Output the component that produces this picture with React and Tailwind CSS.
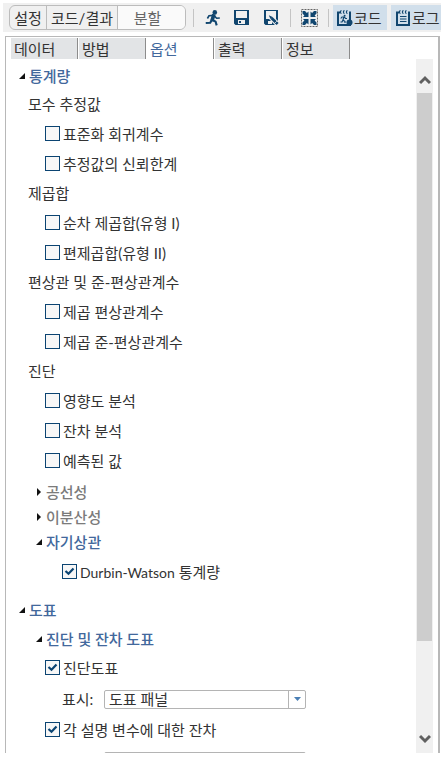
import { useState } from 'react';

const TABS = ['데이터', '방법', '옵션', '출력', '정보'];

const STAT_GROUPS = [
	{ title: '모수 추정값', items: ['표준화 회귀계수', '추정값의 신뢰한계'] },
	{ title: '제곱합', items: ['순차 제곱합(유형 I)', '편제곱합(유형 II)'] },
	{ title: '편상관 및 준-편상관계수', items: ['제곱 편상관계수', '제곱 준-편상관계수'] },
	{ title: '진단', items: ['영향도 분석', '잔차 분석', '예측된 값'] },
];

function RunIcon() {
	return (
		<svg className="w-4 h-4" viewBox="0 0 16 16" fill="none" stroke="#11466f" strokeLinecap="square">
			<circle cx="9.800" cy="2.400" r="2.300" fill="#11466f" stroke="none" />
			<path d="M8.400 6 7.400 9.400" strokeWidth="3.600" />
			<path d="M8.400 5.400 4 5.800 2.800 7.800" strokeWidth="1.600" />
			<path d="M9.800 6.400 11.600 8.200 14 8" strokeWidth="1.600" />
			<path d="M8 10.200 10.600 11.600 11.400 14.400" strokeWidth="2.100" />
			<path d="M6.600 10.400 5.200 12.800 1.800 13" strokeWidth="2.100" />
		</svg>
	);
}

function SaveIcon() {
	return (
		<svg className="w-4 h-4" viewBox="0 0 16 16">
			<path fill="#11466f" fillRule="evenodd" d="M0 0H15V15H1.500L0 13.500ZM2 1V8H13V1ZM4 10V14H11V10ZM5 11H7V13H5Z" />
		</svg>
	);
}

function SaveAsIcon() {
	return (
		<svg className="w-4 h-4" viewBox="0 0 16 16">
			<path fill="#11466f" fillRule="evenodd" d="M0 0H14V15H1.500L0 13.500ZM2 1V9H12V1ZM4 11V14H8V11Z" />
			<path d="M7 7.500 14.500 15" stroke="#f0f0f0" strokeWidth="5" />
			<path d="M7.500 8 13.600 14.100" stroke="#11466f" strokeWidth="2.800" />
			<path d="M4.800 5.200 8.600 6.900 6.500 9Z" fill="#11466f" />
			<path d="M10.800 13.200 12.800 11.200" stroke="#f0f0f0" strokeWidth="0.8" />
		</svg>
	);
}

function FitIcon() {
	return (
		<svg className="w-[17px] h-[18px]" viewBox="0 0 17 18">
			<rect x="0.5" y="0.5" width="16" height="17" fill="none" stroke="#666" strokeDasharray="2 1" />
			<g fill="#11466f">
				<path d="M7.500 8H2L3.400 6.400 1.500 4.500V2H4L5.900 3.900 7.500 2.500Z" />
				<path d="M9.500 8H15L13.600 6.400 15.500 4.500V2H13L11.100 3.900 9.500 2.500Z" />
				<path d="M7.500 10H2L3.400 11.600 1.500 13.500V16H4L5.900 14.100 7.500 15.500Z" />
				<path d="M9.500 10H15L13.600 11.600 15.500 13.500V16H13L11.100 14.100 9.500 15.500Z" />
			</g>
		</svg>
	);
}

// spiral-bound notepad shared by the code and log buttons
function Notepad({ children }) {
	return (
		<svg className="w-4 h-4 shrink-0" viewBox="0 0 16 16" fill="none" stroke="#11466f">
			<path d="M3 2.500H1V15H13V2.500H12" strokeWidth="2" />
			<path d="M4.500 0.600C3 0.600 3 3.400 4.500 3.400M7.500 0.600C6 0.600 6 3.400 7.500 3.400M10.500 0.600C9 0.600 9 3.400 10.500 3.400" strokeWidth="1.100" />
			{children}
		</svg>
	);
}

function CodeIcon() {
	return (
		<Notepad>
			<circle cx="7.600" cy="5.800" r="1" fill="#11466f" stroke="none" />
			<path d="M3.800 8.500 5 7H7.500L8.500 8.500H10M6.800 7 6 10 8 11.500V13M6 10 5 12H3.500" strokeWidth="1.200" />
			<circle cx="12.500" cy="12.500" r="3" fill="#11466f" stroke="none" />
		</Notepad>
	);
}

function LogIcon() {
	return (
		<Notepad>
			<path d="M4 6.500H10.500M4 9H10.500M4 11.500H10.500" strokeWidth="1" />
		</Notepad>
	);
}

function Separator() {
	return <div className="w-px h-[18px] bg-[#c4c4c4] shrink-0" />;
}

function Check({ label, defaultChecked = false }) {
	return (
		<label className="flex items-center h-[30px] gap-[3px]">
			<span className="relative w-[15px] h-[15px] shrink-0 mb-[2px]">
				<input
					type="checkbox"
					defaultChecked={defaultChecked}
					className="peer block appearance-none w-[15px] h-[15px] border border-[#0b4472] bg-[#f7f7f7]"
				/>
				<svg className="absolute inset-0 w-[15px] h-[15px] hidden peer-checked:block pointer-events-none" viewBox="0 0 15 15">
					<path d="M3.500 7 6.500 9.800 11.500 4.500" fill="none" stroke="#0b4472" strokeWidth="2.200" />
				</svg>
			</span>
			<span>{label}</span>
		</label>
	);
}

function Toggle({ label, open, onClick, className }) {
	return (
		<button
			type="button"
			aria-expanded={open}
			onClick={onClick}
			className={`flex items-center h-[25px] gap-1 font-medium ${className}`}
		>
			<svg className="w-[6px] h-[8px]" viewBox="0 0 6 8" fill="#111">
				{open ? <path d="M6 1V7H0Z" /> : <path d="M1 0 5 4 1 8Z" />}
			</svg>
			{label}
		</button>
	);
}

function Combo({ id, label, options }) {
	return (
		<div className="relative w-[202px] h-[19px]">
			<select id={id} aria-label={label} className="block appearance-none w-full h-full border border-[#b4b4b4] rounded-xs bg-white pl-1 leading-[17px]">
				{options.map(o => <option key={o}>{o}</option>)}
			</select>
			<div className="absolute right-px top-px bottom-px w-[17px] border-l border-[#b4b4b4] flex items-center justify-center pointer-events-none">
				<svg className="w-[7px] h-[4px]" viewBox="0 0 7 4"><path d="M0 0H7L3.500 4Z" fill="#4a7fb5" /></svg>
			</div>
		</div>
	);
}

export default function App() {
	const [tab, setTab] = useState('옵션');
	const [open, setOpen] = useState({ stats: true, collinear: false, hetero: false, auto: true, plots: true, diag: true });

	function toggle(k) { setOpen(prev => ({ ...prev, [k]: !prev[k] })); }

	return (
		<div className="h-screen bg-white pl-[3px] pr-[2px] pt-[3px] pb-[5px] flex flex-col overflow-hidden text-[15px] leading-5 text-[#333] font-[Lato,'Noto_Sans_CJK_KR',sans-serif]">
			<div className="flex items-center h-[29px] bg-[#f0f0f0] pl-[6px] shrink-0 overflow-hidden whitespace-nowrap">
				<div className="flex h-[25px] w-[177px] shrink-0 border border-[#bcbcbc] rounded-md overflow-hidden">
					<button type="button" className="w-[37px] border-r border-[#bcbcbc]">설정</button>
					<button type="button" className="w-[71px] border-r border-[#bcbcbc]">코드/결과</button>
					<button type="button" className="flex-1 bg-[#fafafa] text-[#666] pr-2">분할</button>
				</div>
				<div className="flex items-center shrink-0 ml-[7px]">
					<Separator />
					<button type="button" aria-label="실행" className="ml-[11px]"><RunIcon /></button>
					<button type="button" aria-label="저장" className="ml-[13px]"><SaveIcon /></button>
					<button type="button" aria-label="다른 이름으로 저장" className="ml-[14px] mr-[10px]"><SaveAsIcon /></button>
					<Separator />
					<button type="button" aria-label="최대화" className="mx-[10px]"><FitIcon /></button>
					<Separator />
				</div>
				<button type="button" className="flex items-center shrink-0 h-[25px] w-[54px] ml-1 pl-1 gap-px bg-[#d1dfeb]"><CodeIcon />코드</button>
				<button type="button" className="flex items-center shrink-0 h-[25px] w-[50px] ml-1 pl-[5px] bg-[#d1dfeb]"><LogIcon />로그</button>
			</div>

			<div className="mt-1 ml-[2px] mr-px flex-1 min-h-0 flex flex-col border-t border-l border-r-2 border-[#b8b8b8]">
				<div className="flex mt-px ml-1 h-[21px] shrink-0" role="tablist">
					{TABS.map(t => (
						<button
							key={t}
							type="button"
							role="tab"
							aria-selected={t === tab}
							onClick={() => setTab(t)}
							className={`w-[68px] pl-[3px] text-left border-x border-l-white border-r-[#8c8c8c] ${t === tab ? 'bg-white text-[#42689c]' : 'bg-[#e2e4e6]'}`}
						>
							{t}
						</button>
					))}
				</div>

				<div className="flex flex-1 min-h-0">
					<div className="flex-1 min-w-0 overflow-hidden pt-1 pl-[13px]">
						<Toggle label="통계량" open={open.stats} onClick={() => toggle('stats')} className="text-[#42689c]" />
						{open.stats && (
							<div className="pt-[2px] pb-[10px]">
								{STAT_GROUPS.map(g => (
									<fieldset key={g.title} className="pl-[9px]">
										<legend className="h-[29px] leading-[29px]">{g.title}</legend>
										<div className="pl-[17px]">
											{g.items.map(i => <Check key={i} label={i} />)}
										</div>
									</fieldset>
								))}
								<div className="pl-[17px] pt-[3px]">
									<Toggle label="공선성" open={open.collinear} onClick={() => toggle('collinear')} className="text-[#7b7b7b]" />
									<Toggle label="이분산성" open={open.hetero} onClick={() => toggle('hetero')} className="text-[#7b7b7b]" />
									<Toggle label="자기상관" open={open.auto} onClick={() => toggle('auto')} className="text-[#42689c]" />
									{open.auto && (
										<div className="pl-[26px] pt-[3px]">
											<Check label={<><span className="text-sm">Durbin-Watson</span> 통계량</>} defaultChecked />
										</div>
									)}
								</div>
							</div>
						)}
						<Toggle label="도표" open={open.plots} onClick={() => toggle('plots')} className="text-[#42689c]" />
						{open.plots && (
							<div className="pl-[17px] pt-1">
								<Toggle label="진단 및 잔차 도표" open={open.diag} onClick={() => toggle('diag')} className="text-[#42689c]" />
								{open.diag && (
									<div className="pl-[9px] pt-[2px]">
										<Check label="진단도표" defaultChecked />
										<div className="flex items-center h-[32px] pl-[17px]">
											<label htmlFor="diag-view" className="w-[42px]">표시:</label>
											<Combo id="diag-view" options={['도표 패널', '개별 도표']} />
										</div>
										<Check label="각 설명 변수에 대한 잔차" defaultChecked />
										<div className="flex items-center h-[32px] pl-[59px]">
											<Combo id="resid-view" label="잔차 표시" options={['도표 패널', '개별 도표']} />
										</div>
									</div>
								)}
							</div>
						)}
					</div>

					<div className="w-[17px] mr-[5px] shrink-0 bg-[#f0f0f0] flex flex-col items-center">
						<div className="h-[34px] pt-[16px] shrink-0">
							<svg className="w-3 h-[10px]" viewBox="0 0 12 10"><path d="M1 8 6 3 11 8" fill="none" stroke="#606060" strokeWidth="3" /></svg>
						</div>
						<div className="w-[15px] h-[79%] bg-[#cdcdcd]" />
						<div className="mt-auto pb-[9px]">
							<svg className="w-3 h-[10px]" viewBox="0 0 12 10"><path d="M1 2 6 7 11 2" fill="none" stroke="#606060" strokeWidth="3" /></svg>
						</div>
					</div>
				</div>
			</div>
		</div>
	);
}
